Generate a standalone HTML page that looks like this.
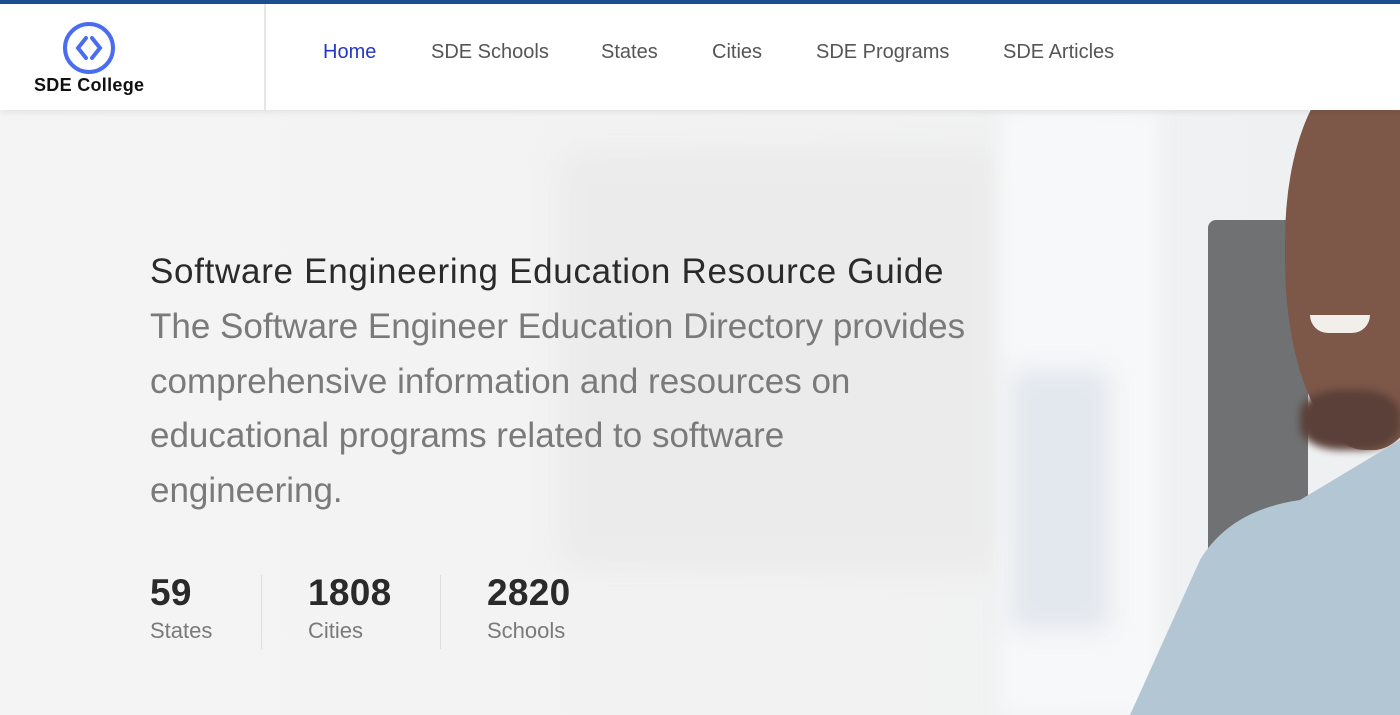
<!DOCTYPE html>
<html><head><meta charset="utf-8"><style>
*{margin:0;padding:0;box-sizing:border-box}
body{width:1400px;height:715px;overflow:hidden;font-family:"Liberation Sans",sans-serif;background:#f3f3f3;position:relative}
.top{position:absolute;left:0;top:0;width:1400px;height:4px;background:#1b4f92}
.hdr{position:absolute;left:0;top:4px;width:1400px;height:106px;background:#fff;box-shadow:0 2px 6px rgba(0,0,0,.08);z-index:5}
.sep{position:absolute;left:264px;top:0;width:2px;height:106px;background:#e6e6e6}
.logo{position:absolute;left:34px;top:75px;font-weight:900;font-size:18px;letter-spacing:.3px;color:#111;z-index:6}
.nav{position:absolute;top:41px;font-size:20px;color:#555;z-index:6}
.hero{position:absolute;left:0;top:110px;width:1400px;height:605px;overflow:hidden;background:linear-gradient(90deg,#f4f4f4 0%,#f2f2f2 60%,#f0f1f2 80%,#eef0f2 100%)}
.b{position:absolute}
h1{position:absolute;left:150px;top:252px;font-size:35px;font-weight:normal;color:#2a2a2a;letter-spacing:.7px;z-index:3;white-space:nowrap}
p.d{position:absolute;left:150px;top:300px;width:830px;font-size:35px;line-height:54.5px;color:#7a7a7a;z-index:3}
.st{position:absolute;top:572px;z-index:3}
.st b{display:block;font-size:37px;color:#2a2a2a;font-weight:bold;letter-spacing:.3px}
.st span{display:block;font-size:22px;color:#7a7a7a;margin-top:4px}
.vl{position:absolute;top:575px;width:1px;height:74px;background:#ddd;z-index:3}
</style></head><body>
<div class="top"></div>
<div class="hdr"><div class="sep"></div>
<svg style="position:absolute;left:62px;top:17px" width="54" height="54" viewBox="0 0 54 54"><circle cx="27" cy="27" r="24" fill="none" stroke="#4a6cf0" stroke-width="4"/><path d="M24 17 L16 27 L24 37 M30 17 L38 27 L30 37" fill="none" stroke="#4a6cf0" stroke-width="4" stroke-linecap="round"/></svg>
</div>
<div class="logo">SDE College</div>
<div class="nav" style="left:323px;color:#2337c8">Home</div>
<div class="nav" style="left:431px">SDE Schools</div>
<div class="nav" style="left:601px">States</div>
<div class="nav" style="left:712px">Cities</div>
<div class="nav" style="left:816px">SDE Programs</div>
<div class="nav" style="left:1003px">SDE Articles</div>
<div class="hero">
<div class="b" style="left:560px;top:40px;width:440px;height:420px;background:#ebebeb;border-radius:20px;filter:blur(14px)"></div>
<div class="b" style="left:1000px;top:0;width:160px;height:605px;background:#f7f8f9;filter:blur(10px)"></div>
<div class="b" style="left:1208px;top:110px;width:100px;height:330px;background:#707172;border-radius:8px 0 0 0"></div>
<div class="b" style="left:1010px;top:260px;width:100px;height:260px;background:#e3e8ee;filter:blur(12px)"></div>
<div class="b" style="left:1285px;top:-40px;width:160px;height:380px;background:#7d5748;border-radius:45% 0 45% 50%"></div>
<div class="b" style="left:1300px;top:280px;width:100px;height:60px;background:#5a4038;border-radius:40%;filter:blur(4px)"></div>
<div class="b" style="left:1310px;top:205px;width:60px;height:18px;background:#f2eeea;border-radius:0 0 30px 30px"></div>
<svg class="b" style="left:0;top:0" width="1400" height="605"><path d="M1130 605 L1200 450 Q1230 400 1300 390 L1400 330 L1400 605 Z" fill="#b3c6d4"/></svg>
</div>
<h1>Software Engineering Education Resource Guide</h1>
<p class="d">The Software Engineer Education Directory provides comprehensive information and resources on educational programs related to software engineering.</p>
<div class="st" style="left:150px"><b>59</b><span>States</span></div>
<div class="vl" style="left:261px"></div>
<div class="st" style="left:308px"><b>1808</b><span>Cities</span></div>
<div class="vl" style="left:440px"></div>
<div class="st" style="left:487px"><b>2820</b><span>Schools</span></div>
</body></html>
